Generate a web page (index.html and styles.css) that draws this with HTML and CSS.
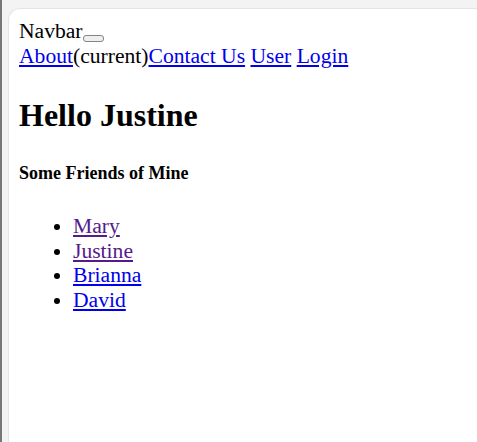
FILE: index.html
```html
<!DOCTYPE html>
<html>
<head>
<meta charset="utf-8">
<link rel="stylesheet" href="styles.css">
</head>
<body>
<div class="frame">
  <div class="panel">
    <nav class="navbar">
      <div class="brand-row"><span class="brand">Navbar</span><button class="toggler" type="button"></button></div>
      <div class="links"><a href="#about">About</a><span>(current)</span><a href="#contact">Contact Us</a> <a href="#user">User</a> <a href="#login">Login</a></div>
    </nav>
    <h1 class="title">Hello Justine</h1>
    <h4 class="subtitle">Some Friends of Mine</h4>
    <ul class="friends">
      <li><a class="visited" href="#mary">Mary</a></li>
      <li><a class="visited" href="#justine">Justine</a></li>
      <li><a href="#brianna">Brianna</a></li>
      <li><a href="#david">David</a></li>
    </ul>
  </div>
</div>
</body>
</html>
```
FILE: styles.css
```css
html, body {
  margin: 0;
  height: 100%;
}
body {
  background: #f3f3f3;
  font-family: "Liberation Serif", "Times New Roman", serif;
  color: #000;
}
.frame {
  height: 100%;
  box-sizing: border-box;
  border-left: 2px solid #777777;
  display: flex;
  overflow: hidden;
}
.panel {
  flex: 1;
  margin: 8px 0 0 6px;
  background: #fff;
  border: 1px solid #e4e4e4;
  border-right: none;
  border-bottom: none;
  border-top-left-radius: 12px;
  padding: 10px 10px 8px;
  font-size: 21.6px;
}
a {
  color: #0000ee;
}
a.visited {
  color: #551a8b;
}
.toggler {
  display: inline-block;
  width: 21px;
  height: 7px;
  padding: 0;
  margin: 0;
  vertical-align: -3px;
  border: 1px solid #858585;
  border-radius: 3px;
  background: #efefef;
}
.title {
  font-size: 32px;
  margin: 28px 0 29px;
}
.subtitle {
  font-size: 18px;
  margin: 0 0 30px;
}
.friends {
  margin: 0;
  padding-left: 54px;
}
.friends li {
  line-height: 24.6px;
}
```
